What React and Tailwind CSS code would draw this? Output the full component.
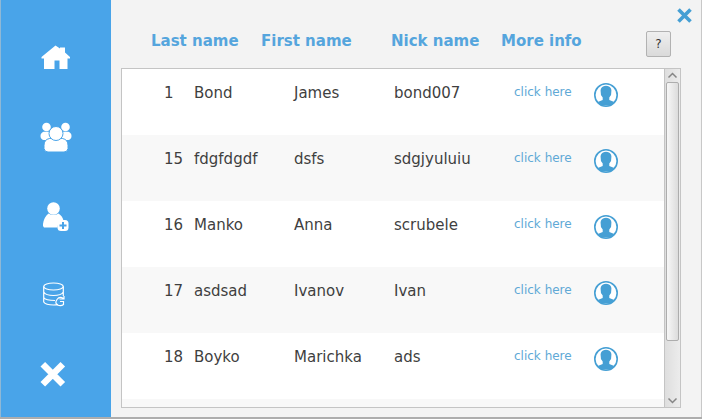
import React from 'react';

const users = [
  { id: 1, last: 'Bond', first: 'James', nick: 'bond007' },
  { id: 15, last: 'fdgfdgdf', first: 'dsfs', nick: 'sdgjyuluiu' },
  { id: 16, last: 'Manko', first: 'Anna', nick: 'scrubele' },
  { id: 17, last: 'asdsad', first: 'Ivanov', nick: 'Ivan' },
  { id: 18, last: 'Boyko', first: 'Marichka', nick: 'ads' },
];

function HomeIcon() {
  return (
    <svg viewBox="0 0 32 32" className="size-8" fill="#fff" aria-hidden="true">
      <path d="M15.500 3.500 20 6.500V5.500h5v5L30 15v1.500h-2.500V27H19.500v-8.500h-5V27H4V16.500H1.500V15z" />
    </svg>
  );
}

function GroupIcon() {
  return (
    <svg viewBox="0 0 32 32" className="size-8" fill="#fff" aria-hidden="true">
      <circle cx="6.500" cy="6" r="4.300" />
      <circle cx="25.500" cy="6" r="4.300" />
      <path d="M3.500 10.800H10V17L8 19H3.500Q.5 18 .5 15t3-4.200zM28.500 10.800H22V17l2 2h4.500q3-1 3-4t-3-4.200z" />
      <g stroke="#49a4e9" strokeWidth="1">
        <path d="M9.500 17.500h13q5.500 1 5.500 7v3q-.5 3.500-4 3.500H8q-3.500 0-4-3.500v-3q0-6 5.500-7z" />
        <circle cx="16" cy="12.500" r="7" />
      </g>
    </svg>
  );
}

function AddUserIcon() {
  return (
    <svg viewBox="0 0 32 32" className="size-8" fill="#fff" aria-hidden="true">
      <circle cx="13.500" cy="8.500" r="6.300" />
      <path d="M8.500 13.500q5 3 10 0 4 2.500 5 7l-5 1.500-1 5.500H4Q2.500 26.500 3 24q1-7 5.500-10.500z" />
      <rect x="17.500" y="20" width="11" height="11" rx="3.500" />
      <path d="M23 22v7M19.500 25.500h7" stroke="#49a4e9" strokeWidth="2" />
    </svg>
  );
}

function DatabaseIcon() {
  return (
    <svg viewBox="0 0 32 32" className="size-8" fill="none" stroke="#fff" strokeWidth="1.200" aria-hidden="true">
      <ellipse cx="13.500" cy="7.500" rx="9.800" ry="3.500" />
      <path d="M3.700 7.500V23q2 3 9.800 3 3 0 4.500-.6M23.300 7.500V17M3.700 13q2 3.500 9.800 3.500t9.800-3.500M3.700 18.500Q5.500 21.500 15 21.500" />
      <path d="M23.500 19.500q-4-2.500-6.500 1t.5 5.500q3.500 1.500 6-.5v-3H20M19.500 20h4.500v-3" />
    </svg>
  );
}

function CrossIcon() {
  return (
    <svg viewBox="0 0 32 32" className="size-8" stroke="#fff" strokeWidth="6.500" aria-hidden="true">
      <path d="m2.800 6.200 20 20m0-20-20 20" />
    </svg>
  );
}

function AvatarIcon() {
  return (
    <svg viewBox="0 0 24 24" className="size-6" aria-hidden="true">
      <circle cx="12" cy="12" r="11.200" fill="#fff" stroke="#459fd4" strokeWidth="1.600" />
      <path
        d="M9 3.500Q12 2 15 3.500 18 5 17.300 9q.5 3-2 5.500v2.500l5 2-3 3.500H6.700l-3-3.500 5-2v-2.500Q6.200 12 6.700 9 6 5 9 3.500z"
        fill="#459fd4"
      />
    </svg>
  );
}

const menu = [
  { label: 'Home', Icon: HomeIcon },
  { label: 'Users', Icon: GroupIcon },
  { label: 'Add user', Icon: AddUserIcon },
  { label: 'Database', Icon: DatabaseIcon },
  { label: 'Exit', Icon: CrossIcon },
];

function Sidebar() {
  return (
    <nav className="flex w-[111px] shrink-0 flex-col items-center gap-[47px] border-l border-[#8fb8d6] bg-[#49a4e9] pt-[42px]">
      {menu.map(({ label, Icon }) => (
        <button key={label} type="button" aria-label={label} className="size-8 shrink-0">
          <Icon />
        </button>
      ))}
    </nav>
  );
}

function ScrollBar() {
  return (
    <div
      aria-hidden="true"
      className="absolute top-[37px] right-0 bottom-0 flex w-[17px] flex-col items-center border border-[#c4c4c4] bg-linear-to-r from-[#dedede] to-[#ececec]"
    >
      <svg viewBox="0 0 15 13" className="h-[13px] w-[15px] shrink-0" fill="none" stroke="#858585" strokeWidth="1.500">
        <path d="m3.500 8.500 4-4 4 4" />
      </svg>
      <div className="w-[13px] flex-[259] rounded-xs border border-[#adadad] bg-linear-to-r from-[#f7f7f7] to-[#dcdcdc]" />
      <div className="flex-[53]" />
      <svg viewBox="0 0 15 13" className="h-[13px] w-[15px] shrink-0" fill="none" stroke="#858585" strokeWidth="1.500">
        <path d="m3.500 4.500 4 4 4-4" />
      </svg>
    </div>
  );
}

function UserTable() {
  return (
    <div className="relative mr-[11px] flex min-h-0 flex-1">
      <table className="flex min-h-0 flex-1 flex-col text-[15px] leading-5">
        <thead className="block h-[37px] shrink-0">
          <tr className="flex items-start pr-[10px] pl-[30px] text-left text-[#55a5dd]">
            <th scope="col" colSpan={2} className="w-[110px]">Last name</th>
            <th scope="col" className="w-[130px]">First name</th>
            <th scope="col" className="w-[110px]">Nick name</th>
            <th scope="col" className="flex-1">More info</th>
            <td>
              <button
                type="button"
                aria-label="Help"
                className="block h-[26px] w-[25px] rounded-xs border border-[#b2b2b2] bg-linear-to-b from-[#efefef] to-[#dadada] text-xs text-[#333]"
              >
                ?
              </button>
            </td>
          </tr>
        </thead>
        <tbody className="block min-h-0 flex-1 overflow-hidden border border-[#c4c4c4] bg-white text-[#3f3f3f]">
          {users.map((u) => (
            <tr key={u.id} className="flex h-[66px] items-start pt-[14px] pl-[42px] even:bg-[#f8f8f8]">
              <td className="w-[30px]">{u.id}</td>
              <td className="w-[100px]">{u.last}</td>
              <td className="w-[100px]">{u.first}</td>
              <td className="w-[120px]">{u.nick}</td>
              <td className="w-20 text-xs text-[#60a9d6]">
                <a href="#info" className="block leading-[18px]">click here</a>
              </td>
              <td>
                <AvatarIcon />
              </td>
            </tr>
          ))}
          <tr className="flex h-[66px] bg-[#f8f8f8]" />
        </tbody>
      </table>
      <ScrollBar />
    </div>
  );
}

export default function App() {
  return (
    <div className="flex h-screen border-b-2 border-[#adadad] bg-[#f3f3f3] font-['DejaVu_Sans',sans-serif]">
      <Sidebar />
      <main className="flex min-w-0 flex-1 flex-col border-r border-[#c8c8c8] pr-[9px] pb-[9px] pl-[10px]">
        <div className="flex h-[31px] shrink-0 justify-end pt-2">
          <button type="button" aria-label="Close" className="size-4">
            <svg viewBox="0 0 16 16" className="size-4" stroke="#459fd4" strokeWidth="3.600" aria-hidden="true">
              <path d="m2.500 1.500 12 12m0-12-12 12" />
            </svg>
          </button>
        </div>
        <UserTable />
      </main>
    </div>
  );
}
